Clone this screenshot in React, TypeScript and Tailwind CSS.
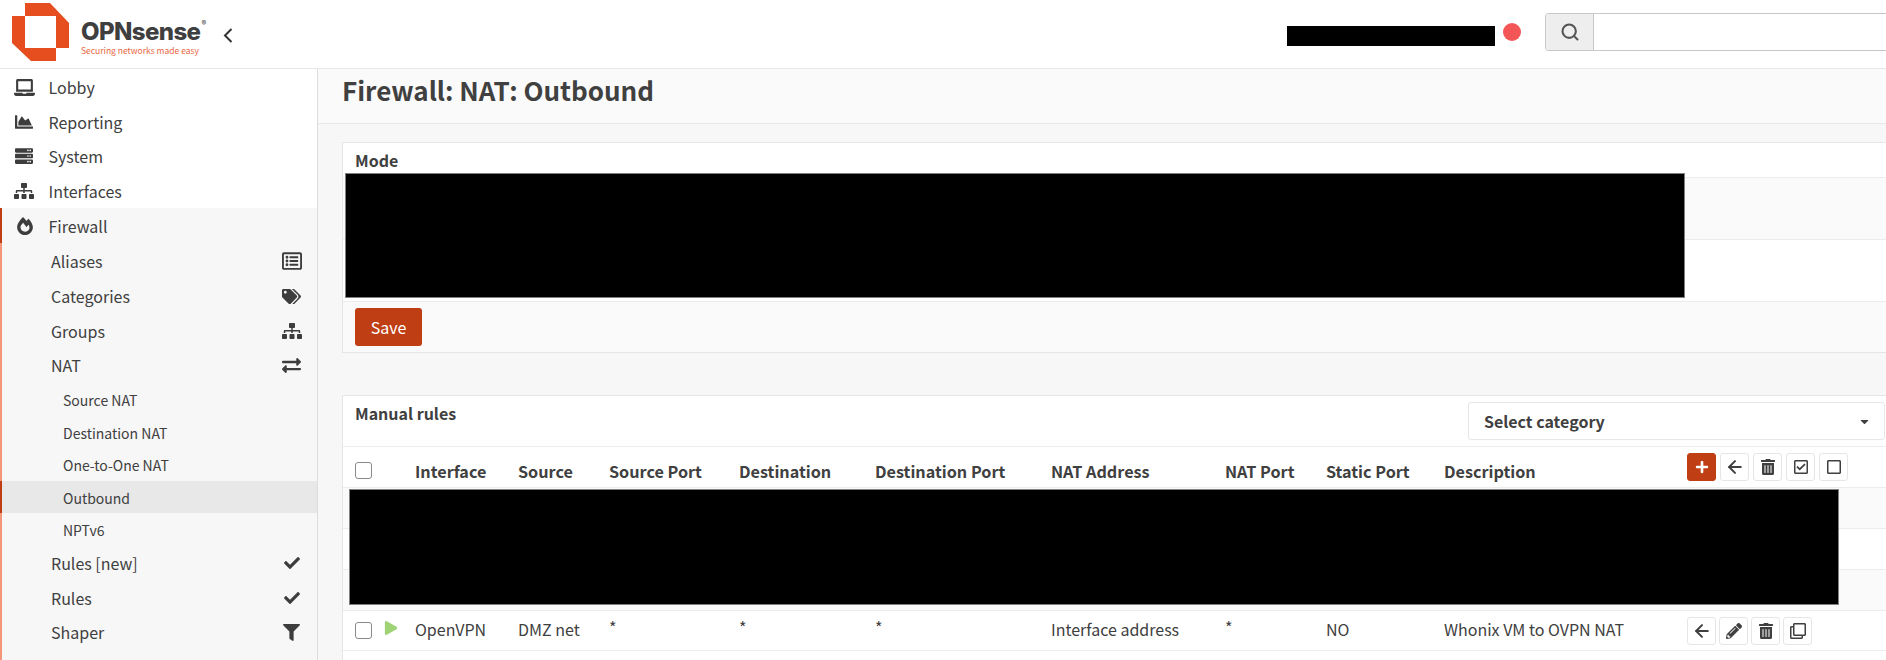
import React from "react";
import {
  FaLaptop, FaChartArea, FaServer, FaSitemap, FaFireAlt, FaRegListAlt, FaTags, FaExchangeAlt, FaCheck, FaFilter,
  FaPlus, FaTrashAlt, FaRegCheckSquare, FaRegSquare, FaPencilAlt, FaRegClone, FaPlay, FaCaretDown,
} from "react-icons/fa";
import { ArrowLeft, Search } from "lucide-react";

const font = "font-['Noto_Sans_CJK_SC','Source_Sans_Pro',sans-serif]";

function TopItem({ icon, label, active }: { icon: React.ReactNode; label: string; active?: boolean }) {
  return (
    <div className={`flex h-[34.6px] items-center border-l-2 pl-3 text-[16px] leading-none text-[#404040] ${active ? "border-[#c03e14] bg-[#f7f7f7]" : "border-transparent"}`}>
      <span className="flex w-[34.5px] justify-start text-[#3d3d3d]">{icon}</span>
      <span>{label}</span>
    </div>
  );
}

function SubItem({ icon, label }: { icon?: React.ReactNode; label: string }) {
  return (
    <div className="flex h-[34.7px] items-center justify-between pl-[49px] pr-[15px] text-[16px] leading-none text-[#404040]">
      <span>{label}</span>
      {icon && <span className="flex w-[21px] justify-center text-[#3d3d3d]">{icon}</span>}
    </div>
  );
}

function NestedItem({ label, active }: { label: string; active?: boolean }) {
  return (
    <div className={`-ml-[2px] flex h-[32.6px] items-center border-l-2 pl-[61px] pt-[2px] text-[14px] leading-none text-[#404040] ${active ? "border-[#c03e14] bg-[#e8e8e8]" : "border-transparent"}`}>
      {label}
    </div>
  );
}

function Btn({ children, primary }: { children: React.ReactNode; primary?: boolean }) {
  return (
    <span className={`flex h-[28px] w-[29px] items-center justify-center rounded-[3px] border ${primary ? "border-[#c03e14] bg-[#c03e14] text-white" : "border-[#e6e6e6] bg-white text-[#404040]"}`}>
      {children}
    </span>
  );
}

function Checkbox({ className = "" }: { className?: string }) {
  return <span className={`block h-[17px] w-[17px] rounded-[3px] border border-[#8a8a8a] bg-white ${className}`} />;
}

const cols = "grid grid-cols-[29px_31px_103px_91px_130px_136px_176px_174px_101px_118px_243px_1fr] items-center pl-[12px]";

const headers = ["Interface", "Source", "Source Port", "Destination", "Destination Port", "NAT Address", "NAT Port", "Static Port", "Description"];
const cells = ["OpenVPN", "DMZ net", "*", "*", "*", "Interface address", "*", "NO", "Whonix VM to OVPN NAT"];

export default function App() {
  return (
    <div className={`${font} h-[660px] w-[1886px] overflow-hidden bg-white text-[#404040]`}>
      <header className="flex h-[69px] items-center overflow-hidden border-b border-[#e8e8e8] bg-white pl-3">
        <div className="flex w-[1275px] shrink-0 items-center">
          <svg width="57" height="58" viewBox="0 0 57 58" className="mb-[4px] shrink-0">
            <path fill="#e64e20" d="M13 0H38L57 20V45H44V13H13Z" />
            <path fill="#e64e20" d="M0 13H13V45H44V58H19L0 40Z" />
          </svg>
          <div className="ml-[12px] mt-[9px] flex w-[122px] flex-col">
            <span className="flex items-start font-['Inter',sans-serif] text-[24px] leading-[22px] font-extrabold tracking-[-0.6px] whitespace-nowrap text-[#3f3f3f]">
              OPNsense<span className="ml-[1px] mt-[-1px] text-[7px] leading-[8px] font-normal">®</span>
            </span>
            <span className="mt-[1px] text-[8.5px] leading-[12px] whitespace-nowrap text-[#e8663f]">Securing networks made easy</span>
          </div>
          <svg width="10" height="15" viewBox="0 0 10 15" className="ml-[20px] mt-[2px] shrink-0">
            <polyline points="8.5,1 2,7.5 8.5,14" fill="none" stroke="#333333" strokeWidth="2" />
          </svg>
        </div>
        <div className="mt-[4px] h-[20px] w-[208px] shrink-0 bg-black" />
        <span className="mb-[4px] ml-[8px] h-[18px] w-[18px] shrink-0 rounded-full bg-[#f45555]" />
        <div className="mb-[4px] ml-[24px] flex h-[38px] w-[400px] shrink-0 rounded-[3px] border border-[#c8c8c8]">
          <span className="flex w-[48px] items-center justify-center border-r border-[#c8c8c8] bg-[#eeeeee] text-[#555]">
            <Search size={20} strokeWidth={2.5} />
          </span>
          <span className="flex-1 bg-white" />
        </div>
      </header>

      <div className="flex h-[591px]">
        <aside className="w-[318px] shrink-0 overflow-hidden border-r border-[#dcdcdc] bg-white pt-[1px]">
          <TopItem icon={<FaLaptop className="text-[21px]" />} label="Lobby" />
          <TopItem icon={<FaChartArea className="ml-[1px] text-[18px]" />} label="Reporting" />
          <TopItem icon={<FaServer className="ml-[1px] text-[18px]" />} label="System" />
          <TopItem icon={<FaSitemap className="text-[20px]" />} label="Interfaces" />
          <TopItem active icon={<FaFireAlt className="ml-[2px] text-[18px]" />} label="Firewall" />
          <div className="border-l-2 border-[#f4967a] bg-[#f7f7f7] pb-4 pt-[1px]">
            <SubItem label="Aliases" icon={<FaRegListAlt className="text-[20px]" />} />
            <SubItem label="Categories" icon={<FaTags className="text-[19px]" />} />
            <SubItem label="Groups" icon={<FaSitemap className="text-[20px]" />} />
            <SubItem label="NAT" icon={<FaExchangeAlt className="text-[19px]" />} />
            <NestedItem label="Source NAT" />
            <NestedItem label="Destination NAT" />
            <NestedItem label="One-to-One NAT" />
            <NestedItem label="Outbound" active />
            <NestedItem label="NPTv6" />
            <SubItem label="Rules [new]" icon={<FaCheck className="text-[16px]" />} />
            <SubItem label="Rules" icon={<FaCheck className="text-[16px]" />} />
            <SubItem label="Shaper" icon={<FaFilter className="text-[17px]" />} />
          </div>
        </aside>

        <main className="min-w-0 flex-1 overflow-hidden bg-[#f7f7f7]">
          <div className="flex h-[55px] items-center border-b border-[#e8e8e8] bg-[#fafafa] pb-[12px] pl-[24px] text-[26px] leading-none font-semibold text-[#404040]">
            Firewall: NAT: Outbound
          </div>

          <section className="relative ml-[24px] mt-[18px] w-[1600px] border border-[#e6e6e6] bg-white">
            <div className="flex h-[34px] items-center pl-3 text-[16px] leading-none font-semibold">Mode</div>
            <div className="h-[62px] border-t border-[#ececec] bg-[#fafafa]" />
            <div className="h-[62px] border-t border-[#ececec] bg-white" />
            <div className="flex h-[51px] items-start border-t border-[#ececec] bg-[#fafafa] pl-3 pt-[6px]">
              <span className="flex h-[38px] w-[67px] items-center justify-center rounded-[3px] bg-[#c03e14] text-[16px] leading-none text-white">Save</span>
            </div>
            <div className="absolute left-[2px] top-[30px] h-[125px] w-[1340px] border border-[#808080] bg-black" />
          </section>

          <section className="relative ml-[24px] mt-[42px] w-[1600px] border-x border-t border-[#e6e6e6] bg-white">
            <div className="flex h-[50px] items-start justify-between pl-3">
              <span className="pt-[7px] text-[16px] leading-[20px] font-semibold">Manual rules</span>
              <div className="mr-[56px] mt-[6px] flex h-[38px] w-[417px] items-center justify-between rounded-[3px] border border-[#e6e6e6] pl-[15px] pr-[13px] text-[16px] leading-none font-semibold">
                <span>Select category</span>
                <FaCaretDown className="text-[13px]" />
              </div>
            </div>
            <div className={`${cols} h-[41px] border-t border-[#ececec] text-[16.2px] leading-none font-semibold`}>
              <Checkbox className="mt-[6px]" />
              <span />
              {headers.map((h) => (
                <span key={h} className="mt-[8px] whitespace-nowrap">{h}</span>
              ))}
              <div className="flex gap-[4px]">
                <Btn primary><FaPlus className="text-[14px]" /></Btn>
                <Btn><ArrowLeft size={20} strokeWidth={2.4} /></Btn>
                <Btn><FaTrashAlt className="text-[16px]" /></Btn>
                <Btn><FaRegCheckSquare className="text-[16px]" /></Btn>
                <Btn><FaRegSquare className="text-[16px]" /></Btn>
              </div>
            </div>
            <div className="h-[41px] border-t border-[#ececec] bg-[#fafafa]" />
            <div className="h-[41px] border-t border-[#ececec] bg-white" />
            <div className="h-[41px] border-t border-[#ececec] bg-[#fafafa]" />
            <div className={`${cols} h-[41px] border-b border-t border-[#ececec] text-[16px] leading-none`}>
              <Checkbox />
              <FaPlay className="mb-[6px] text-[14px] text-[#9fd476]" />
              {cells.map((c, i) => (
                <span key={i} className={`whitespace-nowrap ${c === "*" ? "mb-[7px]" : "mb-[4px]"}`}>{c}</span>
              ))}
              <div className="flex gap-[3px]">
                <Btn><ArrowLeft size={20} strokeWidth={2.4} /></Btn>
                <Btn><FaPencilAlt className="text-[16px]" /></Btn>
                <Btn><FaTrashAlt className="text-[16px]" /></Btn>
                <Btn><FaRegClone className="text-[16px]" /></Btn>
              </div>
            </div>
            <div className="h-[10px]" />
            <div className="absolute left-[6px] top-[93px] h-[116px] w-[1490px] border border-[#808080] bg-black" />
          </section>
        </main>
      </div>
    </div>
  );
}
